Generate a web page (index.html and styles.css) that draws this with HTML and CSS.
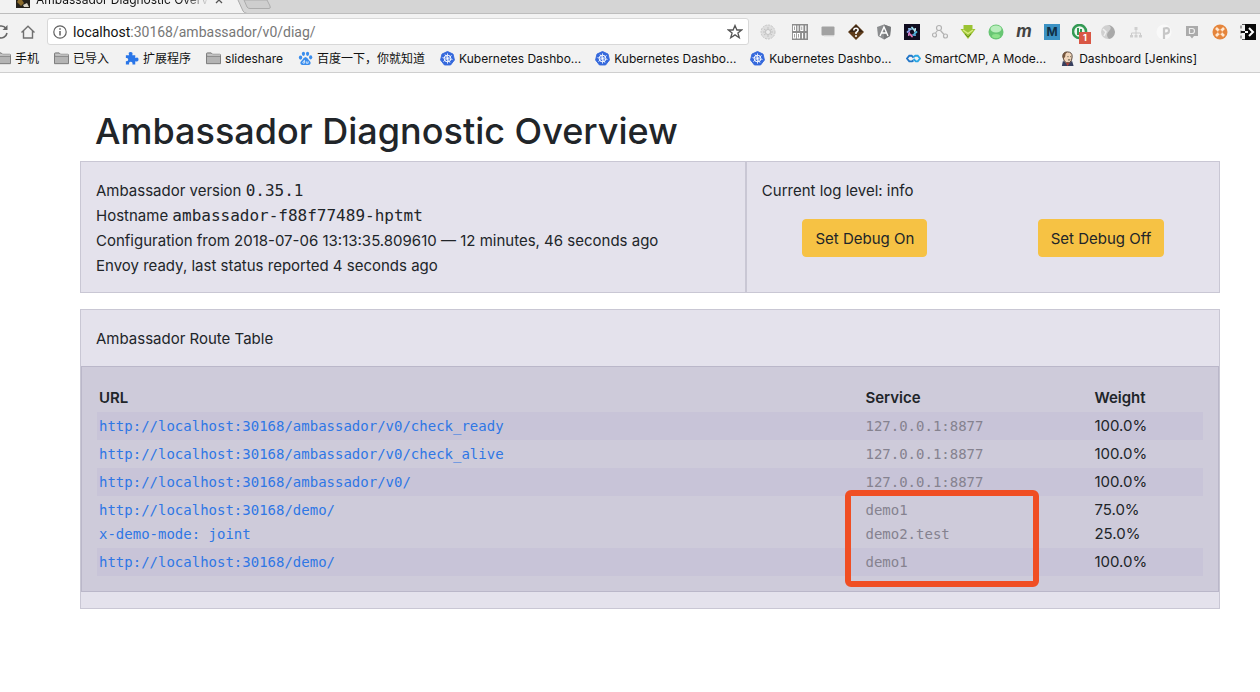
FILE: index.html
```html
<!DOCTYPE html>
<html lang="en">
<head>
<meta charset="utf-8">
<title>Ambassador Diagnostic Overview</title>
<link rel="stylesheet" href="styles.css">
</head>
<body>
<svg class="defs" aria-hidden="true">
  <symbol id="folder" viewBox="0 0 16 14"><path d="M.5 12.500V2Q.5 1 1.500 1H5.500L7 2.500H14.500Q15.500 2.500 15.500 3.500V12.500Z" fill="#b4b4b4" stroke="#777"/><path d="M1 4.500H15" stroke="#777"/><path d="M1.500 3.300H15" stroke="#ddd"/></symbol>
  <symbol id="k8s" viewBox="0 0 16 16"><path d="M8 .5 13.900 3.300 15.400 9.600 11.300 14.900H4.700L.6 9.600 2.100 3.300Z" fill="#3569dc" stroke="#3569dc" stroke-linejoin="round"/><circle cx="8" cy="8" r="3.600" fill="none" stroke="#fff" stroke-width="1"/><path d="M8 2.500V13.500M2.600 7 13.400 9M3.500 11.300 12.500 4.700M5.300 3.600 10.700 12.600" stroke="#fff" stroke-width=".8"/></symbol>
</svg>

<header class="browser">
  <div class="tabs">
    <div class="tab">
      <svg class="favicon" width="16" height="16" viewBox="0 0 16 16"><path d="M1 2H15V16H1Z" fill="#242019"/><path d="M5 5 9 11 6 14 2 10Z" fill="#8a6a2b"/><path d="M8 13 12 11 14 15H9Z" fill="#d8d2c5"/></svg>
      <span class="tab-title">Ambassador Diagnostic Overv</span>
      <button class="tab-close" aria-label="Close tab"><svg width="8" height="8" viewBox="0 0 8 8"><path d="M1 1 7 7M7 1 1 7" stroke="#555" stroke-width="1.300"/></svg></button>
    </div>
    <svg class="tab-edge" width="40" height="14" viewBox="0 0 40 14"><path d="M0 0H3L8 11Q9 13 12 13.500V14H0Z" fill="#f2f2f2"/><path d="M3 0 8 11Q9 13 12 13.500" fill="none" stroke="#aaa"/><path d="M9 0 12 7Q13 8.500 15 8.500H34Q36 8.500 35 6L32 0Z" fill="#cecece" stroke="#acacac"/></svg>
  </div>

  <div class="toolbar">
    <button class="tool reload" aria-label="Reload"><svg width="16" height="16" viewBox="0 0 16 16"><path d="M13 4.500A6 6 0 1 0 14 9" fill="none" stroke="#666" stroke-width="1.600"/><path d="M14.500 1V6H9.500Z" fill="#666"/></svg></button>
    <button class="tool" aria-label="Home"><svg width="16" height="16" viewBox="0 0 16 16"><path d="M1.500 8.500 8 2.200 14.500 8.500M3.500 7V14H12.500V7" fill="none" stroke="#707070" stroke-width="1.400"/></svg></button>
    <div class="address">
      <svg width="14" height="14" viewBox="0 0 14 14"><circle cx="7" cy="7" r="6.200" fill="none" stroke="#606060" stroke-width="1.200"/><path d="M7 6V10.500M7 3.200V4.800" stroke="#606060" stroke-width="1.500"/></svg>
      <label for="url">localhost</label><input id="url" type="text" value=":30168/ambassador/v0/diag/">
      <button class="star" aria-label="Bookmark this page"><svg width="16" height="16" viewBox="0 0 16 16"><path d="M8 1.500 9.900 6H14.600L10.900 8.900 12.300 13.700 8 10.900 3.700 13.700 5.100 8.900 1.400 6H6.100Z" fill="none" stroke="#555" stroke-width="1.300"/></svg></button>
    </div>
    <div class="extensions">
      <svg class="first" viewBox="0 0 16 16"><circle cx="8" cy="8" r="7" fill="#dedede" stroke="#c6c6c6" stroke-dasharray="2 1"/><path d="M4 5 12 11M12 5 4 11M8 3V13M3 8H13" stroke="#c2c2c2"/><circle cx="8" cy="8" r="2.500" fill="#eee" stroke="#c2c2c2"/></svg>
      <svg viewBox="0 0 16 16"><path d="M0 0H16V16H0Z" fill="#8c8c8c"/><g fill="none" stroke="#fff" stroke-width="1.200"><path d="M1.500 2H3.500V6.500H1.500ZM6 1.500V7M8.800 2H10.800V6.500H8.800ZM13.800 1.500V7M1.500 9.500H3.500V14H1.500ZM5.500 9.500H7.500V14H5.500ZM10.500 9V14.500M13.800 9V14.500"/></g></svg>
      <svg viewBox="0 0 16 16"><rect x="1.500" y="2.500" width="13" height="9" rx="1" fill="#a2a2a2"/><path d="M4 12H14" stroke="#ddd"/></svg>
      <svg viewBox="0 0 16 16"><path d="M8 0 16 8 8 16 0 8Z" fill="#5e3c1b"/><path d="M8 1 15 8H1Z" fill="#382414"/><path d="M5.800 6.500Q6 4 8.200 4.200 10.500 4.500 10 6.500 9.700 7.600 8 8.500V10" fill="none" stroke="#fff" stroke-width="1.600"/><circle cx="8" cy="12" r="1" fill="#fff"/></svg>
      <svg viewBox="0 0 16 16"><path d="M8 .5 15 3 14 12 8 15.500 2 12 1 3Z" fill="#8b8d8f"/><path d="M8 .5 15 3 14 12 8 15.500Z" fill="#77797b"/><path d="M4 12 8 3 12 12M5.500 9H10.500" fill="none" stroke="#fff" stroke-width="1.400"/></svg>
      <svg viewBox="0 0 16 16"><path d="M0 0H16V16H0Z" fill="#100d20"/><g fill="none" stroke-width="1.800" stroke-linecap="round"><path d="M8 3.500 9.500 5.500" stroke="#9de0f0"/><path d="M11.200 4.800 10.800 7" stroke="#c8eef5"/><path d="M12.500 8 10.500 9.500" stroke="#4db9df"/><path d="M11.200 11.200 9 10.800" stroke="#5aa9e0"/><path d="M8 12.500 6.500 10.500" stroke="#e476b4"/><path d="M4.800 11.200 5.200 9" stroke="#d981c9"/><path d="M3.500 8 5.500 6.500" stroke="#8b9ae9"/><path d="M4.800 4.800 7 5.200" stroke="#8fc0ec"/></g></svg>
      <svg viewBox="0 0 16 16"><g fill="none" stroke="#b2b2b2" stroke-width="1.200"><circle cx="7" cy="4" r="2.500"/><circle cx="2.500" cy="11" r="2"/><circle cx="13.500" cy="12" r="2"/><path d="M5.500 6.500 3.500 9M8.500 6.500 12 10.500"/></g></svg>
      <svg viewBox="0 0 16 16"><path d="M3.500 1H12.500V5H15.500L8 15 .5 5H3.500Z" fill="#9bc333"/><path d="M3 6 8 9.500 13 6" fill="none" stroke="#d9ec80" stroke-width="1.500"/><path d="M5 10 8 13 11 10" fill="none" stroke="#668f1d"/></svg>
      <svg viewBox="0 0 16 16"><circle cx="8" cy="8" r="7.500" fill="#68c673"/><ellipse cx="8" cy="5" rx="5.500" ry="3.500" fill="#b9edbc"/><ellipse cx="8" cy="12" rx="4" ry="2" fill="#8ee28b"/></svg>
      <span class="letter-m">m</span>
      <span class="letter-box">M</span>
      <span class="badged"><svg viewBox="0 0 16 16"><circle cx="7.500" cy="7.500" r="6.500" fill="#eff8f0" stroke="#349a54" stroke-width="2.600"/><path d="M6 4V11M9 5V9" stroke="#349a54" stroke-width="2"/></svg><b>1</b></span>
      <svg viewBox="0 0 16 16"><circle cx="8" cy="8" r="7" fill="#d0d0d0"/><path d="M8 1Q13 3 9 7T9 15Q14 14 15 8 14 2 8 1Z" fill="#a9a9a9"/><path d="M3 5 6 8 4 12" fill="none" stroke="#eee" stroke-width="1.500"/></svg>
      <svg viewBox="0 0 16 16"><path d="M8 6V9M3.500 11V9H12.500V11M8 9V11" fill="none" stroke="#ccc"/><path d="M6.500 3H9.500V6H6.500ZM2 11H5V13.500H2ZM6.500 11H9.500V13.500H6.500ZM11 11H14V13.500H11Z" fill="#cfcfcf"/></svg>
      <svg viewBox="0 0 16 16"><circle cx="8" cy="8" r="7.500" fill="#f9f9f9"/><path d="M8 15V4.500Q13 3 13 6.500 13 10 8.500 9.500" fill="none" stroke="#c7c7c7" stroke-width="2.200"/></svg>
      <svg viewBox="0 0 16 16"><path d="M2 2H14V12H10L8 14.500 6 12H2Z" fill="#ababab"/><path d="M5.500 4.500H8Q10.500 4.500 10.500 7T8 9.500H5.500Z" fill="none" stroke="#eee" stroke-width="1.200"/></svg>
      <svg viewBox="0 0 16 16"><circle cx="8" cy="8" r="7.500" fill="#e5853c"/><path d="M4 4 12 12M12 4 4 12" stroke="#ffe7cf" stroke-width="2.600"/><circle cx="8" cy="8" r="2" fill="#e5853c"/></svg>
      <svg viewBox="0 0 16 16"><path d="M5 .5H1V15.500H5" fill="none" stroke="#555" stroke-dasharray="3 2"/><path d="M5 0H16V16H5Z" fill="#080808"/><path d="M5 8H8M9 4 13 8 9 12" fill="none" stroke="#fff" stroke-width="2"/><path d="M1 8H5" stroke="#111" stroke-width="2"/></svg>
    </div>
  </div>

  <nav class="bookmarks">
    <a href="#"><svg viewBox="0 0 16 14"><use href="#folder"/></svg>手机</a>
    <a href="#"><svg viewBox="0 0 16 14"><use href="#folder"/></svg>已导入</a>
    <a href="#"><svg viewBox="0 0 16 16"><path d="M2 4.500H5.500Q4 1 7 1T8.800 4.500H12V7.500Q15.500 6 15.500 9T12 10.800V14.500H9Q9.500 11.500 7.200 11.500T5.500 14.500H2V11Q4.500 11 4.500 9T2 7.500Z" fill="#2a76e8"/></svg>扩展程序</a>
    <a href="#"><svg viewBox="0 0 16 14"><use href="#folder"/></svg>slideshare</a>
    <a href="#"><svg viewBox="0 0 16 16"><g fill="#3a8ded"><ellipse cx="2.700" cy="7" rx="1.800" ry="2.300"/><ellipse cx="5.800" cy="3" rx="1.700" ry="2.300"/><ellipse cx="10.200" cy="3" rx="1.700" ry="2.300"/><ellipse cx="13.500" cy="6.700" rx="1.700" ry="2.300"/><path d="M8 6.500Q10 7 11.500 9.500 14.500 12 13 14 11.500 15.500 8 14.800 4.500 15.500 3 14 1.500 12 4.500 9.500 6 7 8 6.500Z"/></g><path d="M6.800 9.500V13H5.500Q4.500 12 5.800 11H6.800M8.800 11V13H10.800V11" fill="none" stroke="#fff" stroke-width=".8"/></svg>百度一下，你就知道</a>
    <a href="#"><svg viewBox="0 0 16 16"><use href="#k8s"/></svg>Kubernetes Dashbo...</a>
    <a href="#"><svg viewBox="0 0 16 16"><use href="#k8s"/></svg>Kubernetes Dashbo...</a>
    <a href="#"><svg viewBox="0 0 16 16"><use href="#k8s"/></svg>Kubernetes Dashbo...</a>
    <a href="#"><svg viewBox="0 0 16 16"><path d="M8 10 6.500 11H3.500L1 8 3.500 5H6L8 7" fill="none" stroke="#2075c7" stroke-width="2"/><path d="M8 6.500 10 5H12.500L15 8 12.500 11H10.500L8 8.500" fill="none" stroke="#28a5e3" stroke-width="2"/></svg>SmartCMP, A Mode...</a>
    <a href="#"><svg viewBox="0 0 16 16"><path d="M2 16 3 11H13L14.500 16Z" fill="#37405f"/><path d="M5 11 8 16 11 12Z" fill="#b7423c"/><path d="M3 6Q3 1 8 1T13 6 10 12.500H7Q4 12 3 6Z" fill="#f1d6bc" stroke="#514035"/><path d="M3.200 8Q1.500 3 6 1L8 .8Q5 3 5.500 6L4 8Z" fill="#75563e"/><path d="M8 6H9M11 6H12M8.500 9.500H11" stroke="#443" /></svg>Dashboard [Jenkins]</a>
  </nav>
</header>

<main class="container">
  <h1>Ambassador Diagnostic Overview</h1>

  <section class="status">
    <div class="info">
      <p>Ambassador version <code>0.35.1</code></p>
      <p>Hostname <code>ambassador-f88f77489-hptmt</code></p>
      <p>Configuration from 2018-07-06 13:13:35.809610 — 12 minutes, 46 seconds ago</p>
      <p>Envoy ready, last status reported 4 seconds ago</p>
    </div>
    <div class="logging">
      <p>Current log level: info</p>
      <div class="actions">
        <button class="btn">Set Debug On</button>
        <button class="btn">Set Debug Off</button>
      </div>
    </div>
  </section>

  <section class="routes">
    <h2>Ambassador Route Table</h2>
    <div class="route-box">
      <table>
        <thead><tr><th class="col-url">URL</th><th class="col-service">Service</th><th>Weight</th></tr></thead>
        <tbody>
          <tr><td><a href="#">http://localhost:30168/ambassador/v0/check_ready</a></td><td><code>127.0.0.1:8877</code></td><td>100.0%</td></tr>
          <tr><td><a href="#">http://localhost:30168/ambassador/v0/check_alive</a></td><td><code>127.0.0.1:8877</code></td><td>100.0%</td></tr>
          <tr><td><a href="#">http://localhost:30168/ambassador/v0/</a></td><td><code>127.0.0.1:8877</code></td><td>100.0%</td></tr>
          <tr><td><a href="#">http://localhost:30168/demo/<br>x-demo-mode: joint</a></td><td><code>demo1<br>demo2.test</code></td><td>75.0%<br>25.0%</td></tr>
          <tr><td><a href="#">http://localhost:30168/demo/</a></td><td><code>demo1</code></td><td>100.0%</td></tr>
        </tbody>
      </table>
      <div class="highlight"></div>
    </div>
  </section>
</main>
</body>
</html>
```
FILE: styles.css
```css
* { box-sizing: border-box; }

body {
  margin: 0;
  background: #fff;
  color: #212529;
  font: 15px/24px Inter, "Noto Sans CJK SC", sans-serif;
}

p, h1, h2 { margin: 0; }
button { font: inherit; cursor: pointer; }
.defs { position: absolute; width: 0; height: 0; }

/* Browser frame */
.browser {
  overflow: hidden;
  background: #f2f2f2;
  border-bottom: 1px solid #cfcfcf;
  color: #111;
}

.tabs {
  display: flex;
  align-items: flex-end;
  height: 14px;
  overflow: hidden;
  background: #d5d5d5;
  border-bottom: 1px solid #bdbdbd;
}

.tab {
  display: flex;
  align-items: center;
  flex: none;
  width: 235px;
  height: 29px;
  margin-bottom: -1px;
  padding: 0 12px 0 15px;
  gap: 5px;
  background: #f2f2f2;
  font-size: 12px;
}

.tab-title {
  flex: 1;
  overflow: hidden;
  white-space: nowrap;
  mask-image: linear-gradient(to right, #000 85%, transparent);
}

.tab-close {
  display: flex;
  padding: 0;
  border: 0;
  background: none;
}

.tab-edge { flex: none; margin-bottom: -1px; }

.toolbar {
  display: flex;
  align-items: center;
  padding-top: 4px;
}

.tool {
  display: flex;
  margin-right: 11px;
  padding: 0;
  border: 0;
  background: none;
}

.reload { margin-left: -7px; }

.address {
  display: flex;
  align-items: center;
  flex: 1;
  height: 27px;
  padding: 0 5px;
  background: #fff;
  border: 1px solid #d8d8d8;
  border-radius: 3px;
  font-family: Roboto, sans-serif;
  font-size: 14px;
}

.address label { margin-left: 6px; }

.address input {
  flex: 1;
  min-width: 0;
  padding: 0;
  border: 0;
  outline: 0;
  background: none;
  color: #777;
  font: inherit;
}

.star { display: flex; padding: 0; border: 0; background: none; }

.extensions {
  display: flex;
  align-items: center;
  gap: 12px;
  margin: 0 4px 0 11px;
}

.extensions svg { display: block; flex: none; width: 16px; height: 16px; }
.extensions .first { margin-right: 4px; }

.letter-m, .letter-box {
  width: 16px;
  height: 16px;
  text-align: center;
  font-weight: 700;
}

.letter-m { font-size: 17px; line-height: 14px; font-style: italic; color: #444; }
.letter-box { font-size: 12px; line-height: 16px; background: #3b92c4; color: #102f45; }

.badged { position: relative; }

.badged b {
  position: absolute;
  left: 7px;
  top: 8px;
  width: 12px;
  background: #d95745;
  color: #fff;
  font-size: 9px;
  line-height: 12px;
  text-align: center;
}

.bookmarks {
  display: flex;
  align-items: center;
  gap: 14px;
  height: 27px;
  margin-left: -4px;
  font-size: 12px;
  white-space: nowrap;
}

.bookmarks a {
  display: flex;
  align-items: center;
  gap: 4px;
  color: inherit;
  text-decoration: none;
}

.bookmarks a:nth-child(-n+5) { padding-right: 1px; }
.bookmarks svg { flex: none; width: 15px; height: 15px; }

/* Diagnostic page */
.container {
  margin: 0 40px 0 80px;
  padding: 34px 0 24px;
}

h1 {
  padding: 0 15px 6px;
  font-size: 36px;
  line-height: 48px;
  font-weight: 500;
}

.status {
  display: grid;
  grid-template-columns: 7fr 5fr;
  margin-bottom: 16px;
  border: 1px solid #c9c7d4;
  background: #e4e2ec;
}

.info { padding: 16px 15px 14px; line-height: 25px; }

code, td a {
  font-family: "DejaVu Sans Mono", monospace;
}

.info code { font-size: 16px; }

.logging {
  padding: 17px 0;
  border-left: 2px solid #c9c7d4;
}

.logging p { padding: 0 15px; }

.actions {
  display: grid;
  grid-template-columns: 1fr 1fr;
  justify-items: center;
  margin-top: 16px;
}

.btn {
  padding: 7px 12px 5px;
  border: 1px solid #f6c244;
  border-radius: 4px;
  background: #f6c244;
  color: #212529;
}

.routes {
  padding-bottom: 16px;
  border: 1px solid #c9c7d4;
  background: #e4e2ec;
}

h2 {
  padding: 17px 15px 15px;
  font-size: 15px;
  line-height: 24px;
  font-weight: 400;
}

.route-box {
  position: relative;
  padding: 17px 15px 15px;
  border: 1px solid #bab7c9;
  background: #cecbda;
}

table { width: 100%; border-collapse: collapse; table-layout: fixed; }
th, td { padding: 2px; text-align: left; vertical-align: top; }
th { font-weight: 600; }
.col-url { width: 69.3%; }
.col-service { width: 20.7%; }
tbody tr:nth-child(odd) { background: #c8c4d8; }
td code, td a { font-size: 14px; }
td code { color: #85828f; }
td a { color: #2f77e5; text-decoration: none; }

.highlight {
  position: absolute;
  left: 67.2%;
  bottom: 4px;
  width: 17%;
  height: 97px;
  border: 6px solid #f04e23;
  border-radius: 6px;
}
```
